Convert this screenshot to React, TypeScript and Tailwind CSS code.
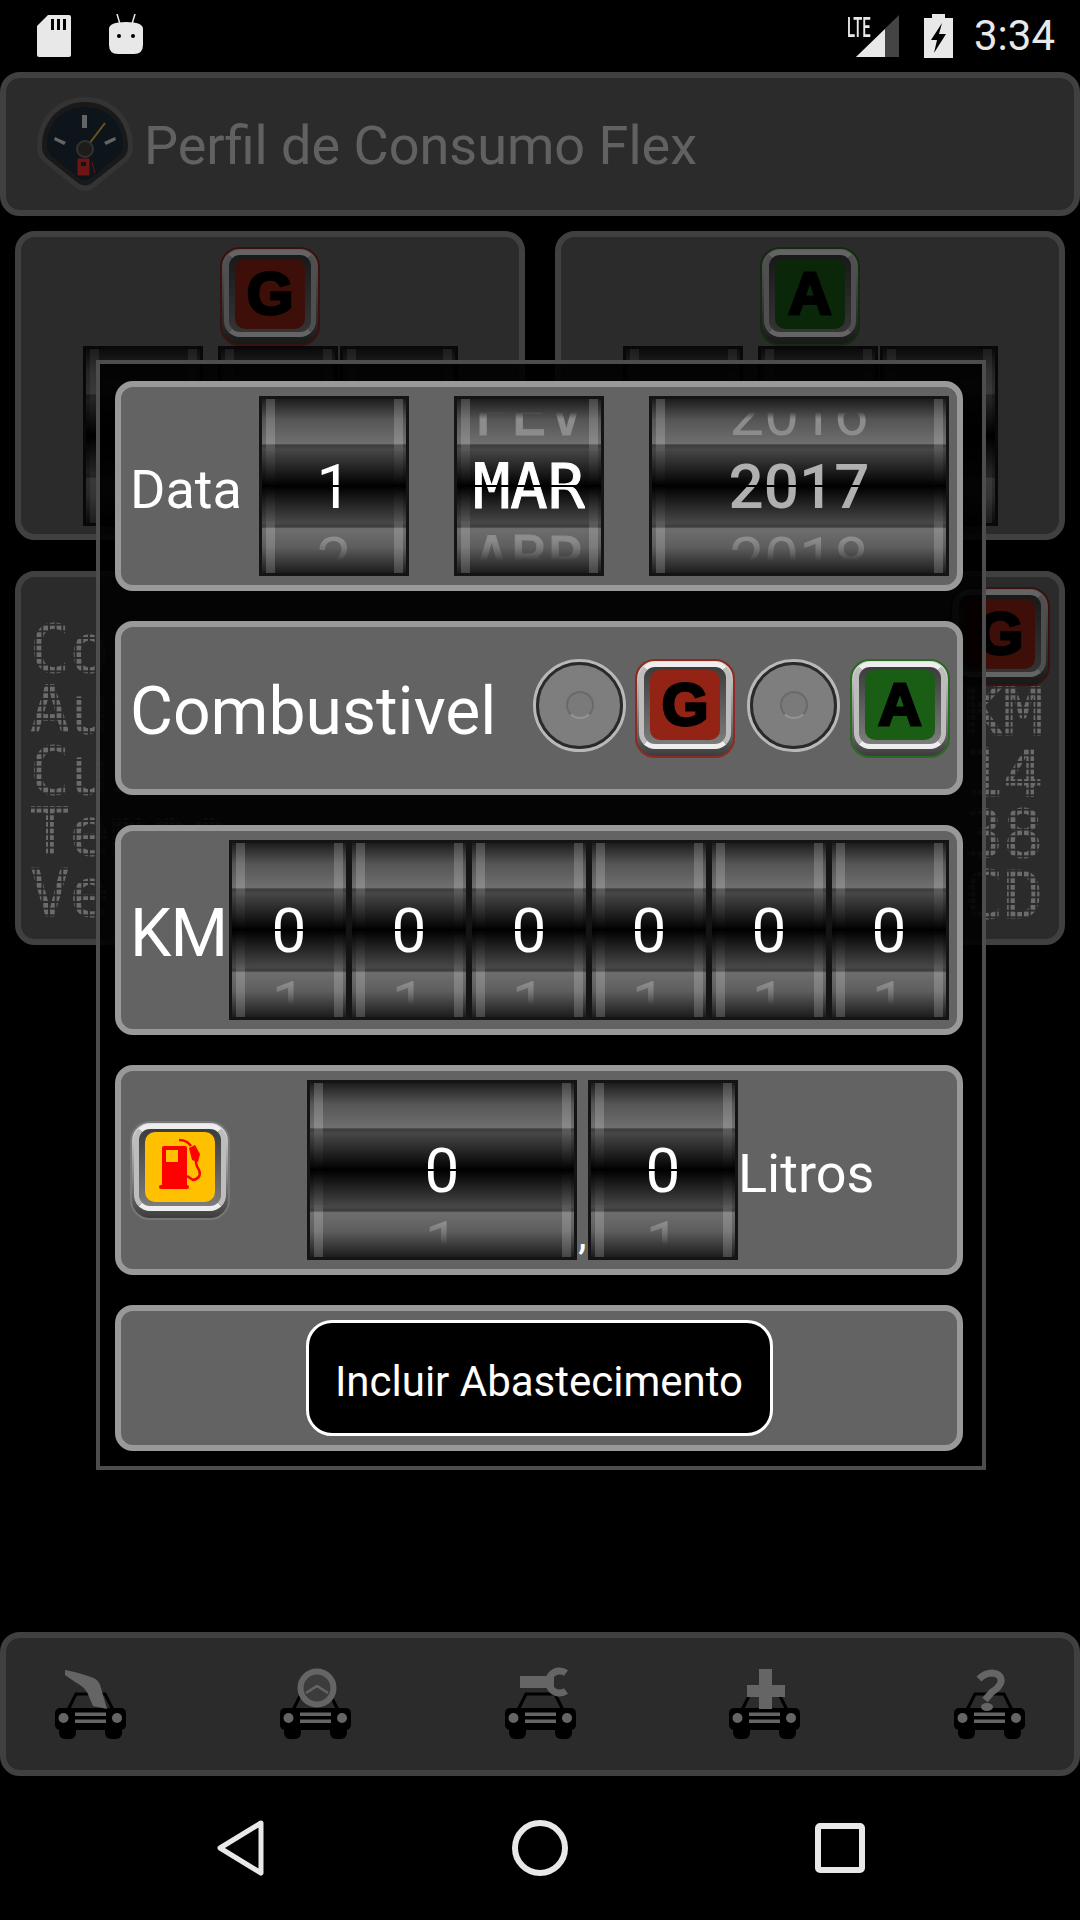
import type { ReactNode } from 'react';

const CarBase = () => (
    <>
        <path d="M13 40 L21 24 H50 L58 40" fill="none" stroke="#000" strokeWidth="3" />
        <rect x="0" y="38" width="71" height="22" rx="5" fill="#000" />
        <rect x="4" y="52" width="17" height="17" rx="6" fill="#000" />
        <rect x="50" y="52" width="17" height="17" rx="6" fill="#000" />
        <circle cx="8.5" cy="48" r="5" fill="#f0f0f0" />
        <circle cx="62" cy="48" r="5" fill="#f0f0f0" />
        <rect x="20" y="42.5" width="31" height="3.5" fill="#f0f0f0" />
        <rect x="20" y="49.5" width="31" height="3.5" fill="#f0f0f0" />
    </>
);

const navIcons: ReactNode[] = [
    <path key="pump" d="M10 0 Q22 2 36 7 Q45 10 46 18 L52 39 L38 36 L32 22 Q28 16 20 12 L10 5 Z" fill="#f0f0f0" />,
    <g key="wheel">
        <circle cx="37" cy="18" r="16.5" fill="#8f8f8f" stroke="#f0f0f0" strokeWidth="6" />
        <path d="M26 23 L37 16 L48 23" fill="none" stroke="#f0f0f0" strokeWidth="2.5" />
    </g>,
    <g key="wrench">
        <rect x="15" y="6" width="34" height="12" fill="#f0f0f0" />
        <path d="M61 3 A11 11 0 1 0 61 21" fill="none" stroke="#f0f0f0" strokeWidth="7" />
    </g>,
    <path key="plus" d="M30 -1 H43 V15 H56 V27 H43 V39 H30 V27 H18 V15 H30 Z" fill="#f0f0f0" />,
    <g key="help">
        <path d="M25 9 Q31 3 38 3 Q48 4 47 12 Q45 18 38 22 L31 30" fill="none" stroke="#f0f0f0" strokeWidth="7" />
        <ellipse cx="33" cy="37" rx="6" ry="4" fill="#f0f0f0" />
    </g>,
];

const FuelPump = () => (
    <svg width="70" height="70" viewBox="0 0 70 70">
        <rect x="17" y="14" width="25" height="43" rx="2" fill="#ff0000" />
        <rect x="21" y="18" width="12" height="12" fill="#ffc000" />
        <rect x="14" y="53" width="30" height="4" rx="2" fill="#ff0000" />
        <path d="M34 8 Q42 8 46 14 M51 26 Q50 32 54 38 Q57 46 48 48 L42 44" fill="none" stroke="#ff0000" strokeWidth="2.5" />
        <path d="M44 16 L50 13 L55 22 L53 30 L47 28 Z" fill="#ff0000" />
    </svg>
);

const Gauge = () => (
    <svg width="96" height="95" viewBox="0 0 96 95" className="shrink-0">
        <path d="M48 0 C75 0 96 20 96 50 C96 58 92 62 88 66 L58 90 Q48 98 38 90 L8 66 C4 62 0 58 0 50 C0 20 21 0 48 0Z" fill="#7c7c7c" />
        <path d="M48 5 C72 5 91 23 91 49 C91 56 88 60 84 63 L55 86 Q48 91 41 86 L12 63 C8 60 5 56 5 49 C5 23 24 5 48 5Z" fill="#3c3c3c" />
        <path d="M48 10 C70 10 86 26 86 48 C86 54 83 58 79 61 L54 81 Q48 85 42 81 L17 61 C13 58 10 54 10 48 C10 26 26 10 48 10Z" fill="#20303f" />
        <rect x="45" y="18" width="5" height="13" fill="#eeeeee" />
        <path d="M18 40 L29 45 L27 48 L17 43 Z M78 40 L67 45 L69 48 L79 43 Z" fill="#eeeeee" />
        <path d="M52 47 L68 26" stroke="#ffc63a" strokeWidth="2" />
        <circle cx="48" cy="52" r="8" fill="#444" stroke="#777" strokeWidth="2" />
        <path d="M41 62 H52 V78 H41 Z M55 65 L58 76" fill="#ff3333" stroke="#ff3333" />
        <rect x="44" y="65" width="5" height="4" fill="#20303f" />
    </svg>
);

const Drum = ({ widthClass, value, above, below, valueClass = 'text-white', fontClass = "[font-family:Roboto,sans-serif] text-[62px]" }: {
    widthClass: string;
    value?: string;
    above?: string;
    below?: string;
    valueClass?: string;
    fontClass?: string;
}) => (
    <div className={`relative h-[180px] shrink-0 overflow-hidden border-[3px] border-[#141414] bg-[linear-gradient(to_bottom,#1c1c1c_0%,#555_12%,#6e6e6e_25%,#727272_25.5%,#3c3c3c_26.5%,#474747_29%,#000_50%,#474747_71%,#3c3c3c_73.5%,#6e6e6e_74.5%,#5e5e5e_85%,#1c1c1c_100%)] ${widthClass}`}>
        <div className="absolute inset-y-0 left-[4px] w-[9px] bg-[linear-gradient(to_bottom,rgba(255,255,255,.18)_0%,rgba(255,255,255,.18)_25%,rgba(255,255,255,.08)_30%,rgba(255,255,255,0)_50%,rgba(255,255,255,.08)_70%,rgba(255,255,255,.18)_75%,rgba(255,255,255,.18)_100%)]" />
        <div className="absolute inset-y-0 right-[3px] w-[9px] bg-[linear-gradient(to_bottom,rgba(255,255,255,.18)_0%,rgba(255,255,255,.18)_25%,rgba(255,255,255,.08)_30%,rgba(255,255,255,0)_50%,rgba(255,255,255,.08)_70%,rgba(255,255,255,.18)_75%,rgba(255,255,255,.18)_100%)]" />
        <div className={`relative flex h-full flex-col items-center justify-center ${fontClass}`}>
            <div className="h-[73px] shrink-0 leading-[73px] text-[#8c8c8c] [mask-image:linear-gradient(to_bottom,transparent_48%,#000_58%)]">{above}</div>
            <div className={`h-[73px] shrink-0 leading-[73px] [mask-image:linear-gradient(to_bottom,#000_48.5%,transparent_48.5%,transparent_50.5%,#000_50.5%)] ${valueClass}`}>{value}</div>
            <div className="h-[73px] shrink-0 leading-[73px] text-[#8c8c8c] [mask-image:linear-gradient(to_bottom,#000_22%,transparent_52%)]">{below}</div>
        </div>
    </div>
);

const Chip = ({ borderClass, fillClass, children }: { borderClass: string; fillClass: string; children: ReactNode }) => (
    <div className={`flex h-[99px] w-[100px] shrink-0 justify-center rounded-[20px] border-2 bg-[linear-gradient(to_bottom,#ddd,#888_55%,#3c3c3c)] pt-[1px] ${borderClass}`}>
        <div className="flex h-[87px] w-[92px] items-center justify-center rounded-[16px] border-[5px] border-[#eeeeee] border-x-[#bdbdbd] bg-[linear-gradient(to_bottom,#3c3c3c,#7c7c7c)]">
            <div className={`flex h-[70px] w-[70px] items-center justify-center rounded-[10px] ${fillClass}`}>{children}</div>
        </div>
    </div>
);

const ChipLetter = ({ letter }: { letter: string }) => (
    <span className="text-[60px] leading-none font-bold text-black [font-family:'Liberation_Sans',sans-serif] [-webkit-text-stroke:3px_black]">{letter}</span>
);

const GasChip = () => (
    <Chip borderClass="border-[#8e2a1f]" fillClass="bg-[#932415]"><ChipLetter letter="G" /></Chip>
);

const AlcoholChip = () => (
    <Chip borderClass="border-[#2a6a22]" fillClass="bg-[#1a5e16]"><ChipLetter letter="A" /></Chip>
);

const Radio = () => (
    <div className="-mt-[6px] h-[93px] w-[93px] shrink-0 rounded-full border-[3px] border-[#b8b8b8]">
        <div className="flex h-full w-full items-center justify-center rounded-full border-[3px] border-[#2a2a2a] bg-[#7e7e7e]">
            <div className="h-[28px] w-[28px] rounded-full border-2 border-[#6a6a6a] border-b-[#949494] bg-[#7a7a7a]" />
        </div>
    </div>
);

const DotLine = ({ text, className = '' }: { text: string; className?: string }) => (
    <div className={`h-[61px] overflow-visible whitespace-nowrap text-[66px] leading-[61px] text-white [font-family:'DejaVu_Sans_Mono',monospace] [-webkit-text-stroke:1px_white] [mask-image:linear-gradient(to_right,#000_5px,transparent_5px),linear-gradient(to_bottom,#000_5px,transparent_5px)] [mask-size:6.67px_6.67px] [mask-composite:intersect] ${className}`}>
        {text}
    </div>
);

const TopCard = ({ chip }: { chip: ReactNode }) => (
    <div className="flex h-[309px] w-[510px] flex-col items-center rounded-[20px] border-[6px] border-[#999] bg-[#666] pt-[10px]">
        {chip}
        <div className="flex">
            <Drum widthClass="w-[120px]" />
            <div className="flex pl-[15px]">
                <Drum widthClass="w-[120px]" />
                <div className="w-[2px]" />
                <Drum widthClass="w-[118px]" />
            </div>
        </div>
    </div>
);

const rowClass = 'flex w-[848px] shrink-0 items-center rounded-[18px] border-[6px] border-[#999] bg-[#636363]';
const segFont = "[font-family:'DejaVu_Sans_Mono',monospace] text-[62px] [-webkit-text-stroke:1px_currentColor]";

const Dialog = () => (
    <div className="absolute top-[288px] left-[96px] flex h-[1110px] w-[890px] flex-col gap-[30px] border-[4px] border-[#4d4d4d] bg-black/90 pt-[17px] pl-[15px]">
        <div className={`${rowClass} h-[210px] pl-[9px]`}>
            <span className="w-[129px] shrink-0 pt-[6px] text-[54px] text-white">Data</span>
            <Drum widthClass="w-[150px]" value="1" below="2" />
            <div className="w-[45px]" />
            <Drum widthClass="w-[150px]" value="MAR" above="FEV" below="ABR" fontClass={segFont} />
            <div className="w-[45px]" />
            <Drum widthClass="w-[300px]" value="2017" above="2016" below="2018" valueClass="text-[#b0b0b0] font-medium" />
        </div>
        <div className={`${rowClass} h-[174px] pl-[9px]`}>
            <span className="w-[403px] shrink-0 pt-[6px] text-[66px] text-white">Combustivel</span>
            <Radio />
            <div className="w-[9px]" />
            <GasChip />
            <div className="w-[12px]" />
            <Radio />
            <div className="w-[10px]" />
            <AlcoholChip />
        </div>
        <div className={`${rowClass} h-[210px] pl-[9px]`}>
            <span className="w-[99px] shrink-0 pt-[6px] text-[66px] tracking-[-1px] text-white">KM</span>
            {[0, 1, 2, 3, 4, 5].map((i) => (
                <Drum key={i} widthClass="w-[120px]" value="0" below="1" />
            ))}
        </div>
        <div className={`${rowClass} h-[210px] pl-[9px]`}>
            <Chip borderClass="border-[#777]" fillClass="bg-[#ffc000]"><FuelPump /></Chip>
            <div className="w-[77px]" />
            <Drum widthClass="w-[270px]" value="0" below="1" />
            <div className="flex h-[180px] w-[11px] shrink-0 items-end justify-center pb-[4px] text-[42px] leading-[42px] text-white">,</div>
            <Drum widthClass="w-[150px]" value="0" below="1" />
            <span className="pt-[6px] text-[54px] text-white">Litros</span>
        </div>
        <div className={`${rowClass} h-[146px] justify-center`}>
            <button className="h-[116px] w-[467px] rounded-[26px] border-[3px] border-white bg-black pt-[6px] text-[42px] text-white">
                Incluir Abastecimento
            </button>
        </div>
    </div>
);

const App = () => {
    return (
        <div className="h-[1920px] w-[1080px] overflow-hidden bg-black [font-family:Roboto,sans-serif]">
            {/* Status bar */}
            <div className="flex h-[72px] items-center pr-[25px] pl-[37px]">
                <svg width="34" height="42" viewBox="0 0 34 42">
                    <path d="M11 0 H32 Q34 0 34 2 V40 Q34 42 32 42 H2 Q0 42 0 40 V11 Z" fill="#e8e8e8" />
                    <path d="M14 4 H17 V15 H14 Z M20 4 H23 V15 H20 Z M26 4 H29 V15 H26 Z" fill="#000" />
                </svg>
                <svg width="34" height="40" viewBox="0 0 34 40" className="ml-[38px] -translate-y-[2px]">
                    <path d="M8 0 L11 10 M26 0 L23 10" stroke="#e8e8e8" strokeWidth="1.5" />
                    <path d="M0 15 Q0 8 17 8 Q34 8 34 15 V31 Q34 40 25 40 H9 Q0 40 0 31 Z" fill="#e8e8e8" />
                    <circle cx="10" cy="22" r="2" fill="#000" />
                    <circle cx="24" cy="22" r="2" fill="#000" />
                </svg>
                <div className="relative ml-auto h-[42px] w-[52px]">
                    <span className="absolute top-[-7px] left-0 origin-left scale-x-[.55] text-[27px] font-medium text-[#e8e8e8]">LTE</span>
                    <svg width="43" height="42" viewBox="0 0 43 42" className="absolute top-0 left-[9px]">
                        <path d="M43 0 V42 H0 Z" fill="#444" />
                        <path d="M29 14 V42 H0 Z" fill="#e8e8e8" />
                    </svg>
                </div>
                <svg width="29" height="44" viewBox="0 0 29 44" className="ml-[25px]">
                    <path d="M8 0 H21 V4 H29 V44 H0 V4 H8 Z" fill="#e8e8e8" />
                    <path d="M18 9 L7 26 H13 L10 39 L22 20 H15 Z" fill="#000" />
                </svg>
                <span className="ml-[21px] text-[42px] leading-none text-[#e8e8e8]">3:34</span>
            </div>

            {/* Main window, dimmed by the dialog's scrim */}
            <div className="relative flex h-[1704px] flex-col">
                <div className="flex h-[144px] shrink-0 items-center gap-[11px] rounded-[20px] border-[6px] border-[#999] bg-[#666] pl-[31px]">
                    <Gauge />
                    <span className="pt-[2px] text-[54px] text-[#e8e8e8]">Perfil de Consumo Flex</span>
                </div>

                <div className="mt-[15px] flex justify-center gap-[30px]">
                    <TopCard chip={<GasChip />} />
                    <TopCard chip={<AlcoholChip />} />
                </div>

                <div className="mx-[15px] mt-[31px] flex h-[374px] justify-between rounded-[20px] border-[6px] border-[#999] bg-[#666] pr-[16px] pl-[9px]">
                    <div className="flex flex-col pt-[42px]">
                        <DotLine text="Consumo" />
                        <DotLine text="Autonomia" />
                        <DotLine text="Custo" />
                        <DotLine text="Tempo" />
                        <DotLine text="Velocidade" />
                    </div>
                    <div className="flex flex-col items-end pt-[10px]">
                        <div className="-mr-[7px]"><GasChip /></div>
                        <DotLine text="KM" className="-mt-[4px]" />
                        <DotLine text="14" />
                        <DotLine text="38" />
                        <DotLine text="CD" />
                    </div>
                </div>

                <div className="mt-auto flex h-[144px] shrink-0 items-center justify-between rounded-[20px] border-[6px] border-[#999] bg-[#666] pr-[48px] pl-[49px]">
                    {navIcons.map((icon, i) => (
                        <svg key={i} width="72" height="71" viewBox="0 -1 72 71" className="overflow-visible">
                            <CarBase />
                            {icon}
                        </svg>
                    ))}
                </div>

                <div className="absolute inset-0 bg-black/58" />
                <Dialog />
            </div>

            {/* Navigation bar */}
            <div className="flex h-[144px] items-center justify-between pr-[215px] pl-[217px]">
                <svg width="47" height="56" viewBox="0 0 47 56">
                    <path d="M44 3 L3 28 L44 53 Z" fill="none" stroke="#e8e8e8" strokeWidth="5" strokeLinejoin="round" />
                </svg>
                <svg width="56" height="56" viewBox="0 0 56 56">
                    <circle cx="28" cy="28" r="25" fill="none" stroke="#e8e8e8" strokeWidth="6" />
                </svg>
                <svg width="50" height="50" viewBox="0 0 50 50">
                    <rect x="3" y="3" width="44" height="44" rx="2" fill="none" stroke="#e8e8e8" strokeWidth="6" />
                </svg>
            </div>
        </div>
    );
};

export default App;
